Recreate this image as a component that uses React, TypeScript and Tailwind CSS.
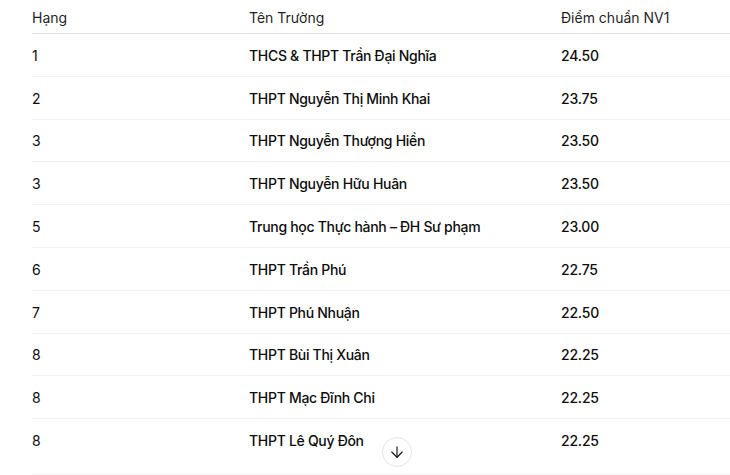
import React from 'react';
import { ArrowDown } from 'lucide-react';

const rows: [string, string, string][] = [
  ['1', 'THCS & THPT Trần Đại Nghĩa', '24.50'],
  ['2', 'THPT Nguyễn Thị Minh Khai', '23.75'],
  ['3', 'THPT Nguyễn Thượng Hiền', '23.50'],
  ['3', 'THPT Nguyễn Hữu Huân', '23.50'],
  ['5', 'Trung học Thực hành – ĐH Sư phạm', '23.00'],
  ['6', 'THPT Trần Phú', '22.75'],
  ['7', 'THPT Phú Nhuận', '22.50'],
  ['8', 'THPT Bùi Thị Xuân', '22.25'],
  ['8', 'THPT Mạc Đĩnh Chi', '22.25'],
  ['8', 'THPT Lê Quý Đôn', '22.25'],
];

const App: React.FC = () => {
  return (
    <div className="relative h-[475px] w-[730px] overflow-hidden bg-white pl-8 text-[14px] text-[#0d0d0d] [font-family:Inter,'Noto_Sans',sans-serif]">
      <div className="grid h-[34px] grid-cols-[217px_312px_1fr] items-center border-b border-[#e3e3e3] pt-[1px] text-[#1f1f1f]">
        <div>Hạng</div>
        <div>Tên Trường</div>
        <div>Điểm chuẩn NV1</div>
      </div>
      {rows.map((r, i) => (
        <div
          key={i}
          className={
            i === rows.length - 1
              ? 'grid h-[56px] grid-cols-[217px_312px_1fr] items-center border-b border-[#f2f2f2] pb-[13px]'
              : 'grid h-[42.8px] grid-cols-[217px_312px_1fr] items-center border-b border-[#f2f2f2] pt-[1px]'
          }
        >
          <div>{r[0]}</div>
          <div className="font-medium tracking-[-0.3px]">{r[1]}</div>
          <div className="font-medium tracking-[-0.2px]">{r[2]}</div>
        </div>
      ))}
      <button className="absolute left-[382px] top-[437px] flex h-[30px] w-[30px] items-center justify-center rounded-full border border-[#e5e5e5] bg-white text-[#111]">
        <ArrowDown size={18} strokeWidth={1.5} />
      </button>
    </div>
  );
};

export default App;
